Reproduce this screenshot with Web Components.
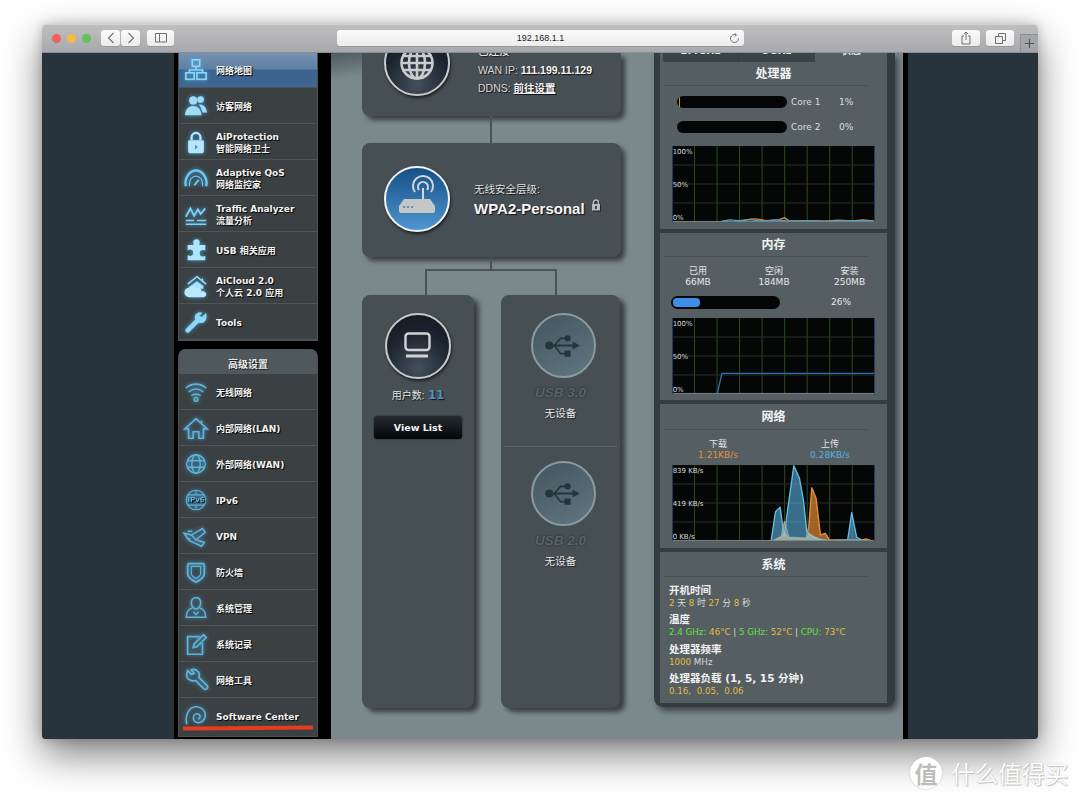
<!DOCTYPE html>
<html lang="zh">
<head>
<meta charset="utf-8">
<title>ASUS Router</title>
<style>
html, body { margin: 0; height: 799px; overflow: hidden; background: #fff; }
body { font-family: "DejaVu Sans", "Noto Sans CJK SC", sans-serif; position: relative; }
mac-window { box-shadow: 0 16px 38px rgba(0, 0, 0, .5), 0 0 12px rgba(0, 0, 0, .2); }
</style>
</head>
<body>

<mac-window>
    <mac-toolbar slot="toolbar"></mac-toolbar>
    <side-menu>
        <side-item active label="网络地图"><svg slot="icon" viewBox="0 0 28 28" fill="none" stroke="#8fd4f5" stroke-width="1.8"><rect x="10" y="3" width="8" height="7"/><rect x="3" y="17" width="9" height="7" /><rect x="15" y="17" width="10" height="7"/><path d="M14 10v4M7 17v-3h14v3"/></svg></side-item>
        <side-item label="访客网络"><svg slot="icon" viewBox="0 0 28 28" fill="#9fdcf8"><circle cx="11" cy="8" r="4.5"/><circle cx="19" cy="7" r="3.6"/><path d="M2 24c1-7 4-10 9-10s8 3 9 10zM17 12c5 0 8 3 9 9h-5c-1-4-2-6-4-9z"/></svg></side-item>
        <side-item label="AiProtection" sub="智能网络卫士"><svg slot="icon" viewBox="0 0 28 28" fill="#b5e6fb"><path d="M8 12V9a6 6 0 0 1 12 0v3h-2.500V9a3.500 3.500 0 0 0-7 0v3z"/><path fill-rule="evenodd" d="M7 12h14a1.500 1.500 0 0 1 1.500 1.500V24a2 2 0 0 1-2 2h-13a2 2 0 0 1-2-2V13.500A1.500 1.500 0 0 1 7 12zM13 17v5l3-2.500z"/></svg></side-item>
        <side-item label="Adaptive QoS" sub="网络监控家"><svg slot="icon" viewBox="0 0 28 28" fill="none" stroke="#6cc6ef"><path stroke-width="2.600" d="M3 23C1 13 8 6 14 6s13 7 11 17"/><path stroke-width="1.200" d="M7 23c-1-7 3-11 7-11s8 4 7 11"/><path stroke-width="2" d="M12 22l5-6"/></svg></side-item>
        <side-item label="Traffic Analyzer" sub="流量分析"><svg slot="icon" viewBox="0 0 28 28" fill="none" stroke="#82d0f3" stroke-width="2"><path d="M3 17l5-9 4 8 4-7 3 5 5-6"/><path stroke-width="1.500" d="M3 21h9M15 21h10M3 25h22"/></svg></side-item>
        <side-item label="USB 相关应用"><svg slot="icon" viewBox="0 0 28 28" fill="#b0e4fb"><path d="M11 6a3.500 3.500 0 0 1 7 0c0 1-.5 1.500-.5 2.500H24v6c-1 0-1.500-.5-2.500-.5a3.500 3.500 0 0 0 0 7c1 0 1.500-.5 2.500-.5V25H5v-5.500c1 .5 1.500 1 2.500 1a3.500 3.500 0 0 0 0-7c-1 0-1.500.5-2.500 1V8.500h6.500C11.500 7.500 11 7 11 6z"/></svg></side-item>
        <side-item label="AiCloud 2.0" sub="个人云 2.0 应用"><svg slot="icon" viewBox="0 0 28 28"><path fill="none" stroke="#9fdcf8" stroke-width="1.500" d="M5 12L15 4l10 8M21 6v3"/><path fill="#a6e0fa" d="M8 14l7-5 7 5v3H8z"/><path fill="#b8e8fc" d="M7 26a5 5 0 0 1-1-10c1-3 7-3 8 0 3-1 6 1 6 4 3-1 5 1 5 3s-1 3-3 3z"/></svg></side-item>
        <side-item label="Tools"><svg slot="icon" viewBox="0 0 28 28" fill="#8ed7f8"><path d="M25 4l-4.500 4.500-3-1L21 4c-3-1.500-7 0-8 3-.5 1.500-.3 3 .2 4.200L3 21.500a2.500 2.500 0 0 0 3.500 3.500l10.300-10.200c3 1 6 0 7.700-2.800 1.200-2.300 1-5.500.5-8z"/></svg></side-item>
    </side-menu>
    <side-menu heading="高级设置">
        <side-item label="无线网络"><svg slot="icon" viewBox="0 0 28 28" fill="none" stroke="#62b3d8" stroke-width="1.700"><path d="M3 10c6-6 16-6 22 0M6 14c5-4 11-4 16 0M9 18c3-2 7-2 10 0"/><circle cx="14" cy="22" r="2"/></svg></side-item>
        <side-item label="内部网络(LAN)"><svg slot="icon" viewBox="0 0 28 28" fill="none" stroke="#62b3d8" stroke-width="1.800"><path d="M2 15L14 4l12 11h-4v10h-5v-7h-6v7H6V15zM20 6v4"/></svg></side-item>
        <side-item label="外部网络(WAN)"><svg slot="icon" viewBox="0 0 28 28" fill="none" stroke="#62b3d8" stroke-width="1.500"><circle cx="14" cy="14" r="10"/><ellipse cx="14" cy="14" rx="4.500" ry="10"/><path d="M4.500 10.500h19M4.500 17.500h19"/></svg></side-item>
        <side-item label="IPv6"><svg slot="icon" viewBox="0 0 28 28" fill="none" stroke="#62b3d8" stroke-width="1.200"><circle cx="14" cy="14" r="10.500"/><path d="M5 8.500h18M5 19.500h18M14 3.500v4M14 20v4"/><text x="14" y="16.500" font-size="7.500" font-family="DejaVu Sans" font-weight="700" fill="#62b3d8" stroke="none" text-anchor="middle">IPv6</text></svg></side-item>
        <side-item label="VPN"><svg slot="icon" viewBox="0 0 28 28" fill="none" stroke="#62b3d8" stroke-width="1.600"><path d="M1 11l8 2 12-7 3 4-10 8 9 3-3 4-13-6z"/><path d="M9 13l5 5M5 9h5M4 17h4"/></svg></side-item>
        <side-item label="防火墙"><svg slot="icon" viewBox="0 0 28 28" fill="none" stroke="#62b3d8" stroke-width="2"><path d="M6 5h16l1 3v8c0 4-5 7-9 9-4-2-9-5-9-9V8z"/><path stroke-width="1.200" d="M9 8h10v8c0 2-3 4-5 5-2-1-5-3-5-5z"/></svg></side-item>
        <side-item label="系统管理"><svg slot="icon" viewBox="0 0 28 28" fill="none" stroke="#62b3d8" stroke-width="1.700"><path d="M14 3c3.500 0 5 2.500 5 5.500S17 15 14 15s-5-3.500-5-6.500S10.500 3 14 3z"/><path d="M10 14c-4 1-6 3-6.500 10h21C24 17 22 15 18 14M11 18l3 3 3-3"/></svg></side-item>
        <side-item label="系统记录"><svg slot="icon" viewBox="0 0 28 28" fill="none" stroke="#62b3d8" stroke-width="1.800"><path d="M18 6H5v19h16V13"/><path d="M11 18l1-4L22 4l3 3-10 10z"/></svg></side-item>
        <side-item label="网络工具"><svg slot="icon" viewBox="0 0 28 28" fill="none" stroke="#62b3d8" stroke-width="1.800"><path d="M5 4l4 4 3-1-3-4c4-1.500 8 1 8.500 5 0 1 0 2-.5 3l9 9a2.500 2.500 0 0 1-3.500 3.500l-9-9c-4 1.500-9-1-9.500-5-.2-2 .2-4 1-5z"/></svg></side-item>
        <side-item label="Software Center" tall><svg slot="icon" viewBox="0 0 28 28" fill="none" stroke="#62b3d8" stroke-width="1.700"><path d="M4 22C2 13 6 3 14 3c6 0 10 4 10 9s-4 9-9 8c-4-1-5-5-3-8 1.500-2 5-2 6 0 1 2 0 4-2 4"/></svg></side-item>
        <red-mark></red-mark>
    </side-menu>
    <router-map slot="map">
        <net-card slot="top" class="wan">
            <status-orb kind="dark" cut><svg viewBox="0 0 66 66" fill="none" stroke="#c9cccd" stroke-width="2.600"><circle cx="33" cy="33" r="15.500"/><ellipse cx="33" cy="33" rx="8" ry="15.500"/><path d="M33 17v32M18 26h30M17 33h32M18 40h30"/></svg></status-orb>
            <wan-info></wan-info>
        </net-card>
        <net-card slot="security" class="sec">
            <status-orb kind="blue"><svg viewBox="0 0 66 66"><path fill="#c4c6c8" d="M20 33h26l5 7v5a2 2 0 0 1-2 2H17a2 2 0 0 1-2-2v-5z"/><g fill="#5b7da0"><circle cx="20" cy="41" r="1.100"/><circle cx="24" cy="41" r="1.100"/><circle cx="28" cy="41" r="1.100"/></g><path fill="none" stroke="#d5d7d8" stroke-width="2" d="M39 33V22M35 24a5 5 0 1 1 8 0M31 26a10 10 0 1 1 16 0"/></svg></status-orb>
            <security-info></security-info>
        </net-card>
        <client-card slot="client"></client-card>
        <usb-card slot="usb"></usb-card>
    </router-map>
    <status-column slot="status">
        <status-panel heading="处理器" style="height:176px">
            <status-tabs slot="top"></status-tabs>
            <core-row label="Core 1" value="1%" level="1"></core-row>
            <core-row label="Core 2" value="0%"></core-row>
            <usage-chart style="margin-top:13px" series='[{"s":"#d98a33","p":"205,226 232,220 252,219 282,224 320,222 338,215 350,224 378,226 420,224 460,226 500,223 540,225 575,222 610,226"},{"s":"#46a7d6","p":"150,226 175,222 200,224 232,221 262,225 290,224 312,222 340,224 370,225 410,224 450,226 500,225 560,224 610,225"}]'></usage-chart>
        </status-panel>
        <status-panel heading="内存" style="height:167px">
            <stat-row>
                <stat-block label="已用" value="66MB"></stat-block>
                <stat-block label="空闲" value="184MB"></stat-block>
                <stat-block label="安装" value="250MB"></stat-block>
            </stat-row>
            <mem-bar value="26%" level="26"></mem-bar>
            <usage-chart style="margin-top:9px" series='[{"s":"#2f72b5","p":"136,227 150,166 610,166"}]'></usage-chart>
        </status-panel>
        <status-panel heading="网络" style="height:144px;--head-h:26px">
            <stat-row two>
                <stat-block label="下载" value="1.21KB/s" color="#e0913d"></stat-block>
                <stat-block label="上传" value="0.28KB/s" color="#58b0e0"></stat-block>
            </stat-row>
            <usage-chart labels="839 KB/s,419 KB/s,0 KB/s" style="margin-top:4px" series='[{"s":"#e0913d","f":"rgba(224,135,50,.72)","p":"303,227 328,215 338,170 351,217 403,220 411,185 420,68 433,100 446,210 461,205 473,225 573,225 583,222 598,227"},{"s":"#67bce6","f":"rgba(88,175,220,.62)","p":"298,227 311,140 325,127 337,215 348,130 366,2 383,40 395,105 405,200 423,215 443,223 473,227 528,225 540,143 555,217 573,227"},{"f":"rgba(190,195,170,.55)","p":"303,227 328,215 338,200 351,217 403,220 411,205 446,222 473,227"}]'></usage-chart>
        </status-panel>
        <status-panel heading="系统" style="height:151px;--head-h:25px">
            <sys-info></sys-info>
        </status-panel>
    </status-column>
</mac-window>
<water-mark></water-mark>

<script>
class MacWindow extends HTMLElement {
    constructor() {
        super();
        this.attachShadow({ mode: 'open' });
        this.shadowRoot.innerHTML = `
            <style>
                :host { display: block; position: absolute; left: 42px; top: 24px; width: 996px; height: 715px; border-radius: 5px 5px 3px 3px; overflow: hidden; }
                .body { display: flex; height: 686px; background: #27343e; }
                .page { display: flex; margin-left: 132px; width: 734px; background: #000; }
                .menu { width: 140px; margin-left: 4px; flex: none; display: flex; flex-direction: column; gap: 8px; }
                .map { width: 572px; margin-left: 13px; flex: none; background: linear-gradient(170deg, #4c5a60 0, #7b898d 28px); display: flex; padding-left: 31px; box-sizing: border-box; gap: 33px; }
            </style>
            <slot name="toolbar"></slot>
            <div class="body">
                <div class="page">
                    <div class="menu"><slot></slot></div>
                    <div class="map"><slot name="map"></slot><slot name="status"></slot></div>
                </div>
            </div>`;
    }
}

class MacToolbar extends HTMLElement {
    constructor() {
        super();
        this.attachShadow({ mode: 'open' });
        this.shadowRoot.innerHTML = `
            <style>
                :host { display: flex; align-items: flex-start; height: 29px; box-sizing: border-box; padding-top: 5px; background: linear-gradient(#bfbfc1, #a8a9ac); border-top: 1px solid #d2d2d4; border-bottom: 1px solid #8d8e90; position: relative; }
                .light { width: 9px; height: 9px; border-radius: 50%; margin-top: 3.500px; flex: none; }
                .btn { height: 16px; background: linear-gradient(#fafafa, #ececec); border-radius: 3px; box-shadow: 0 1px 0 #97989a; display: flex; align-items: center; justify-content: center; flex: none; }
                .url { width: 407px; margin-left: 163px; margin-right: 208px; font: 9px "Liberation Sans", sans-serif; color: #222; position: relative; }
                .url svg { position: absolute; right: 4px; top: 3px; }
                .plus { position: absolute; right: 0; top: 9px; width: 18px; height: 18px; background: #a4a5a8; border: 1px solid #8d8e90; border-width: 1px 0 0 1px; box-sizing: border-box; }
                svg { display: block; }
            </style>
            <span class="light" style="margin-left:10px;background:#f0625a"></span>
            <span class="light" style="margin-left:6px;background:#f4bd3f"></span>
            <span class="light" style="margin-left:6px;background:#5fc453"></span>
            <span class="btn" style="width:19px;margin-left:10px"><svg width="8" height="12" fill="none" stroke="#6e6e70" stroke-width="1.100"><path d="M6.500 1L1.500 6l5 5"/></svg></span>
            <span class="btn" style="width:19px;margin-left:1px"><svg width="8" height="12" fill="none" stroke="#6e6e70" stroke-width="1.100"><path d="M1.500 1l5 5-5 5"/></svg></span>
            <span class="btn" style="width:27px;margin-left:7px"><svg width="12" height="10" fill="none" stroke="#6e6e70"><path d="M.5.500h11v8.500H.5zM4.500 .5v8.500"/></svg></span>
            <span class="btn url">192.168.1.1<svg width="11" height="11" fill="none" stroke="#6e6e70"><path d="M9.500 5.500A4 4 0 1 1 7 1.800M5.500 .2l2 1.600-1.700 1.800"/></svg></span>
            <span class="btn" style="width:28px"><svg width="10" height="14" fill="none" stroke="#6e6e70"><path d="M3 5H1v8h8V5H7M5 9V1M3 3l2-2 2 2"/></svg></span>
            <span class="btn" style="width:28px;margin-left:6px"><svg width="11" height="11" fill="none" stroke="#6e6e70"><path d="M.5 3.500h7v7h-7zM3.500 3.500V.5h7v7h-3"/></svg></span>
            <span class="plus"><svg width="17" height="17" fill="none" stroke="#4e4f51" stroke-width="1.100"><path d="M8.500 4v9M4 8.500h9"/></svg></span>`;
    }
}

class SideMenu extends HTMLElement {
    constructor() {
        super();
        this.attachShadow({ mode: 'open' });
        const heading = this.getAttribute('heading');
        this.shadowRoot.innerHTML = `
            <style>
                :host { display: block; background: #3b4042; position: relative; border: solid #4b5153; border-width: 0 1px 1px; box-sizing: border-box; }
                :host([heading]) { border-radius: 8px 8px 0 0; flex: 1; margin-bottom: 2px; }
                .head { height: 25px; line-height: 31px; text-align: center; font-size: 10px; font-weight: 700; color: #e8e8e8; background: #4f585b; border-radius: 7px 7px 0 0; text-shadow: 1px 1px 0 #222; }
            </style>
            ${heading ? `<div class="head">${heading}</div>` : ''}
            <slot></slot>`;
    }
}

class SideItem extends HTMLElement {
    constructor() {
        super();
        this.attachShadow({ mode: 'open' });
        const sub = this.getAttribute('sub');
        this.shadowRoot.innerHTML = `
            <style>
                :host { display: flex; align-items: center; height: 36px; box-sizing: border-box; border-bottom: 1px solid #4f5557; color: #f2f2f2; font-size: 9px; font-weight: 700; line-height: 12px; text-shadow: 1px 1px 1px #000; }
                :host([active]) { height: 35px; background: linear-gradient(#7492b2 0, #5f80a3 16px, #3c638f 17px, #3f6691 100%); }
                :host([tall]) { height: 38px; border-bottom: 0; }
                .icon { width: 28px; height: 28px; margin-left: 3px; margin-right: 6px; flex: none; filter: drop-shadow(0 0 2px rgba(70, 175, 235, .85)); }
                ::slotted(svg) { display: block; width: 26px; height: 26px; margin: 1px; }
                .text { padding-top: 2px; }
                :host([tall]) .text { padding-top: 0; }
            </style>
            <div class="icon"><slot name="icon"></slot></div>
            <div class="text">${this.getAttribute('label')}${sub ? `<div>${sub}</div>` : ''}</div>`;
    }
}

class RedMark extends HTMLElement {
    constructor() {
        super();
        this.attachShadow({ mode: 'open' });
        this.shadowRoot.innerHTML = `
            <style>
                :host { display: block; position: absolute; left: 4px; bottom: 7px; width: 130px; height: 3.500px; background: #e63c20; transform: rotate(-.5deg); border-radius: 1px; }
            </style>`;
    }
}

class RouterMap extends HTMLElement {
    constructor() {
        super();
        this.attachShadow({ mode: 'open' });
        this.shadowRoot.innerHTML = `
            <style>
                :host { display: block; width: 259px; flex: none; }
                .line { width: 2px; height: 27px; margin-left: 128px; background: #4a5356; }
                .tree { height: 38px; position: relative; }
                .tree svg { display: block; }
                .row { display: flex; gap: 27px; }
            </style>
            <slot name="top"></slot>
            <div class="line"></div>
            <slot name="security"></slot>
            <div class="tree"><svg width="259" height="38" fill="none" stroke="#4a5356" stroke-width="2"><path d="M129 0v13M64 38V13h130v25"/></svg></div>
            <div class="row"><slot name="client"></slot><slot name="usb"></slot></div>`;
    }
}

class NetCard extends HTMLElement {
    constructor() {
        super();
        this.attachShadow({ mode: 'open' });
        this.shadowRoot.innerHTML = `
            <style>
                :host { display: flex; box-sizing: border-box; background: #464f53; box-shadow: 4px 4px 5px rgba(0, 0, 0, .55); border-radius: 8px; padding-left: 22px; overflow: hidden; gap: 24px; }
                :host(.wan) { height: 63px; border-radius: 0 0 8px 8px; gap: 28px; }
                :host(.sec) { height: 114px; padding-top: 23px; }
            </style>
            <slot></slot>`;
    }
}

class StatusOrb extends HTMLElement {
    constructor() {
        super();
        this.attachShadow({ mode: 'open' });
        this.shadowRoot.innerHTML = `
            <style>
                :host { display: block; width: 66px; height: 66px; flex: none; box-sizing: border-box; border-radius: 50%; border: 2.500px solid #c6cacc; box-shadow: 1px 2px 3px rgba(0, 0, 0, .6); position: relative; }
                :host([kind=dark]) { background: radial-gradient(circle at 50% 85%, #44505c 0, #1c2530 55%, #101720 100%); }
                :host([kind=blue]) { background: linear-gradient(#155086, #4f95cf); border-color: #f2f4f5; }
                :host([kind=usb]) { background: linear-gradient(150deg, #44565f, #5f7681); border-color: #8b9a9f; width: 65px; height: 65px; box-shadow: none; }
                :host([cut]) { margin-top: -23px; }
                ::slotted(svg) { position: absolute; left: -2.500px; top: -2.500px; width: 66px; height: 66px; }
            </style>
            <slot></slot>`;
    }
}

class WanInfo extends HTMLElement {
    constructor() {
        super();
        this.attachShadow({ mode: 'open' });
        this.shadowRoot.innerHTML = `
            <style>
                :host { display: block; font: 10.500px "Liberation Sans", "Noto Sans CJK SC", sans-serif; color: #d4d7d8; line-height: 17.500px; margin-top: 9.250px; text-shadow: 1px 1px 1px #111; }
                b { color: #f4f4f4; font-size: 10.500px; }
                u { color: #f4f4f4; font-weight: 700; }
                .cut { margin: -19.250px 0 1.750px; color: #fff; }
            </style>
            <div class="cut">已连接</div>
            <div>WAN IP: <b>111.199.11.129</b></div>
            <div>DDNS: <u>前往设置</u></div>`;
    }
}

class SecurityInfo extends HTMLElement {
    constructor() {
        super();
        this.attachShadow({ mode: 'open' });
        this.shadowRoot.innerHTML = `
            <style>
                :host { display: block; margin-top: 15px; font: 10.500px "Liberation Sans", "Noto Sans CJK SC", sans-serif; color: #dfe1e2; text-shadow: 1px 1px 1px #111; }
                .name { display: flex; align-items: flex-start; margin-top: 4px; font-size: 15px; line-height: 18px; font-weight: 700; color: #f6f6f6; gap: 6px; }
                svg { display: block; margin-top: -1px; filter: drop-shadow(1px 1px 0 #222); }
            </style>
            <div>无线安全层级:</div>
            <div class="name">WPA2-Personal <svg width="10" height="12" viewBox="0 0 10 12"><path fill="none" stroke="#b8bcbd" stroke-width="1.500" d="M2.500 5V3.500a2.500 2.500 0 0 1 5 0V5"/><path fill="#b8bcbd" fill-rule="evenodd" d="M1 5h8v6.500H1zM4.200 7v3h1.600V7z"/></svg></div>`;
    }
}

class ClientCard extends HTMLElement {
    constructor() {
        super();
        this.attachShadow({ mode: 'open' });
        this.shadowRoot.innerHTML = `
            <style>
                :host { display: flex; flex-direction: column; align-items: center; width: 112px; height: 413px; box-sizing: border-box; padding-top: 18px; background: #464f53; border-radius: 8px; box-shadow: 5px 4px 5px rgba(0, 0, 0, .55); font: 10px "Liberation Sans", "Noto Sans CJK SC", sans-serif; color: #e2e4e5; }
                .count { margin-top: 8px; height: 18px; line-height: 18px; text-shadow: 1px 1px 1px #111; }
                .count b { font: 700 11.500px "DejaVu Sans", sans-serif; color: #4f92cc; margin-left: 1px; }
                button { display: block; margin-top: 11px; width: 88px; height: 23px; border: 0; padding: 0; border-radius: 3px; background: linear-gradient(#252c2f, #050708); color: #f2f2f2; font: 700 9.500px "DejaVu Sans", sans-serif; box-shadow: 0 0 2px rgba(0, 0, 0, .6); }
            </style>
            <status-orb kind="dark"><svg viewBox="0 0 66 66" fill="none" stroke="#d1d3d4" stroke-width="2.400"><rect x="20.500" y="20.500" width="24" height="16.500" rx="3"/><path stroke-width="3" d="M21 43h22"/></svg></status-orb>
            <div class="count">用户数: <b>11</b></div>
            <button>View List</button>`;
    }
}

class UsbCard extends HTMLElement {
    constructor() {
        super();
        this.attachShadow({ mode: 'open' });
        const usb = `<svg viewBox="0 0 65 65" fill="#26343c" stroke="#26343c"><circle cx="18" cy="32" r="3.500"/><path d="M18 32h24" stroke-width="2"/><path stroke="none" d="M41 28l7 4-7 4z"/><path fill="none" stroke-width="1.600" d="M23 32l6-7h6M23 32l6 8h6"/><circle cx="36" cy="25" r="2.500"/><rect x="33.500" y="37.500" width="5" height="5"/></svg>`;
        this.shadowRoot.innerHTML = `
            <style>
                :host { display: block; width: 119px; height: 413px; background: #464f53; border-radius: 8px; box-shadow: 5px 4px 5px rgba(0, 0, 0, .55); font: 10.500px "Liberation Sans", "Noto Sans CJK SC", sans-serif; color: #e6e8e8; }
                .slot { height: 151px; box-sizing: border-box; padding: 18px 0 0 30px; }
                hr + .slot { padding-top: 14px; }
                hr { margin: 0 3px; border: 0; border-top: 1px solid #5e6669; }
                .name { margin: 6px 0 0 -30px; text-align: center; font: italic 700 13.500px/17px "Liberation Sans", sans-serif; color: #59646a; text-shadow: 0 0 2px #1d2326; }
                .none { margin: 4px 0 0 -30px; text-align: center; line-height: 16px; text-shadow: 1px 1px 1px #222; }
            </style>
            <div class="slot"><status-orb kind="usb">${usb}</status-orb><div class="name">USB 3.0</div><div class="none">无设备</div></div>
            <hr>
            <div class="slot"><status-orb kind="usb">${usb}</status-orb><div class="name">USB 2.0</div><div class="none">无设备</div></div>`;
    }
}

class StatusColumn extends HTMLElement {
    constructor() {
        super();
        this.attachShadow({ mode: 'open' });
        this.shadowRoot.innerHTML = `
            <style>
                :host { display: flex; flex-direction: column; gap: 4px; width: 241px; height: 654px; flex: none; box-sizing: border-box; padding: 0 8px 4px 6px; background: #333d41; border-radius: 0 0 9px 9px; box-shadow: 3px 4px 6px rgba(0, 0, 0, .5); }
            </style>
            <slot></slot>`;
    }
}

class StatusPanel extends HTMLElement {
    constructor() {
        super();
        this.attachShadow({ mode: 'open' });
        this.shadowRoot.innerHTML = `
            <style>
                :host { display: block; width: 227px; flex: none; background: #555f62; color: #e4e6e6; font-size: 9px; line-height: 11px; }
                .head { height: var(--head-h, 24px); box-sizing: border-box; margin: 0 19px 0 4px; text-align: center; padding-left: 15px; font-size: 12px; font-weight: 700; line-height: calc(var(--head-h, 24px) + 1px); color: #f2f3f3; border-bottom: 1px solid #465053; }
            </style>
            <slot name="top"></slot>
            <div class="head">${this.getAttribute('heading')}</div>
            <slot></slot>`;
    }
}

class StatusTabs extends HTMLElement {
    constructor() {
        super();
        this.attachShadow({ mode: 'open' });
        this.shadowRoot.innerHTML = `
            <style>
                :host { display: flex; height: 9px; overflow: hidden; padding-left: 3px; font-size: 10px; font-weight: 700; line-height: 9px; color: #e8e8e8; }
                span { display: block; height: 9px; text-align: center; background: #3a4448; }
                i { display: block; font-style: normal; margin-top: -7px; }
                span + span { border-left: 1px solid #333d41; }
                .on { background: none; }
            </style>
            <span style="width:75px"><i>2.4GHz</i></span>
            <span style="width:76px"><i>5GHz</i></span>
            <span class="on" style="width:72px;border:0"><i>状态</i></span>`;
    }
}

class CoreRow extends HTMLElement {
    constructor() {
        super();
        this.attachShadow({ mode: 'open' });
        const level = this.getAttribute('level');
        this.shadowRoot.innerHTML = `
            <style>
                :host { display: flex; align-items: center; height: 12px; margin: 0 0 0 17px; line-height: 12px; color: #dadcdc; }
                .bar { width: 110px; height: 12px; background: #050707; border-radius: 6px; overflow: hidden; margin-right: 4px; flex: none; }
                .bar i { display: block; height: 12px; width: ${level || 0}px; background: #d98a33; margin-left: 2px; }
                .name { width: 48px; }
            </style>
            <div class="bar"><i></i></div>
            <div class="name">${this.getAttribute('label')}</div>
            <div>${this.getAttribute('value')}</div>`;
        this.style.marginBottom = level ? '13px' : '0';
        this.style.marginTop = level ? '10px' : '0';
    }
}

class StatRow extends HTMLElement {
    constructor() {
        super();
        this.attachShadow({ mode: 'open' });
        this.shadowRoot.innerHTML = `
            <style>
                :host { display: grid; grid-template-columns: 76px 76px 75px; margin-top: 9px; text-align: center; }
                :host([two]) { grid-template-columns: 112px 112px; padding-left: 2px; }
            </style>
            <slot></slot>`;
    }
}

class StatBlock extends HTMLElement {
    constructor() {
        super();
        this.attachShadow({ mode: 'open' });
        const color = this.getAttribute('color') || 'inherit';
        this.shadowRoot.innerHTML = `
            <style>
                :host { display: block; }
                .value { color: ${color}; }
            </style>
            <div>${this.getAttribute('label')}</div>
            <div class="value">${this.getAttribute('value')}</div>`;
    }
}

class MemBar extends HTMLElement {
    constructor() {
        super();
        this.attachShadow({ mode: 'open' });
        this.shadowRoot.innerHTML = `
            <style>
                :host { display: flex; align-items: center; height: 13px; margin: 8px 0 0 11px; }
                .bar { width: 109px; height: 13px; box-sizing: border-box; padding: 2px; background: #050707; border-radius: 7px; margin-right: 51px; flex: none; }
                .bar i { display: block; height: 9px; width: ${this.getAttribute('level')}%; background: #3c8ee8; border-radius: 4px; }
            </style>
            <div class="bar"><i></i></div>
            <div>${this.getAttribute('value')}</div>`;
    }
}

class UsageChart extends HTMLElement {
    constructor() {
        super();
        this.attachShadow({ mode: 'open' });
        const labels = (this.getAttribute('labels') || '100%,50%,0%').split(',');
        const series = JSON.parse(this.getAttribute('series') || '[]');
        let grid = '';
        for (let i = 1; i < 9; i++) grid += `<path d="M${i * 67.7} 0v228" stroke="#2d4a22" stroke-width="3"/>`;
        for (let i = 1; i < 4; i++) grid += `<path d="M0 ${i * 57}h610" stroke="#2c3030" stroke-width="3"/>`;
        const lines = series.map(s => `<polygon points="${s.p}" fill="${s.f || 'none'}" stroke="${s.s || 'none'}" stroke-width="4" stroke-linejoin="round"/>`.replace('polygon', s.f ? 'polygon' : 'polyline')).join('');
        this.shadowRoot.innerHTML = `
            <style>
                :host { display: block; width: 203px; height: 76px; margin-left: 12px; }
                svg { display: block; width: 203px; height: 76px; }
                text { fill: #d5d8d8; font: 21px "DejaVu Sans", sans-serif; }
            </style>
            <svg viewBox="0 0 610 228">
                <rect width="610" height="228" fill="#050707"/>
                ${grid}
                ${lines}
                <path d="M0 226.500h610" stroke="#7b8589" stroke-width="3"/>
                <path d="M1.500 0v228M608.500 0v228" stroke="#2b3560" stroke-width="3"/>
                <text x="2" y="24">${labels[0]}</text>
                <text x="2" y="124">${labels[1]}</text>
                <text x="2" y="222">${labels[2]}</text>
            </svg>`;
    }
}

class SysInfo extends HTMLElement {
    constructor() {
        super();
        this.attachShadow({ mode: 'open' });
        this.shadowRoot.innerHTML = `
            <style>
                :host { display: block; padding: 7px 0 0 9px; font-size: 8.700px; line-height: 12px; color: #d8dada; }
                h4 { margin: 0; font-size: 10.500px; line-height: 13px; font-weight: 700; color: #f0f1f1; }
                p { margin: 0 0 4.300px; white-space: nowrap; }
                .y { color: #e4bb42; }
                .g { color: #66e043; }
            </style>
            <h4>开机时间</h4>
            <p><span class="y">2</span> 天 <span class="y">8</span> 时 <span class="y">27</span> 分 <span class="y">8</span> 秒</p>
            <h4>温度</h4>
            <p><span class="g">2.4 GHz:</span> <span class="y">46°C</span> | <span class="g">5 GHz:</span> <span class="y">52°C</span> | <span class="g">CPU:</span> <span class="y">73°C</span></p>
            <h4>处理器频率</h4>
            <p><span class="y">1000</span> MHz</p>
            <h4>处理器负载 (1, 5, 15 分钟)</h4>
            <p class="y">0.16,&nbsp; 0.05,&nbsp; 0.06</p>`;
    }
}

class WaterMark extends HTMLElement {
    constructor() {
        super();
        this.attachShadow({ mode: 'open' });
        this.shadowRoot.innerHTML = `
            <style>
                :host { display: flex; align-items: center; gap: 9px; position: absolute; left: 910px; top: 756px; color: #fff; font: 23.500px "Noto Sans CJK SC", sans-serif; text-shadow: 0 0 1px #aaa, 1px 1px 1px #c4c4c4; white-space: nowrap; }
                .logo { width: 32px; height: 32px; border-radius: 50%; background: #fff; box-shadow: 0 0 2px #bbb; color: #bdbdbd; font-size: 23px; font-weight: 700; line-height: 32px; text-align: center; text-shadow: none; }
            </style>
            <div class="logo">值</div>
            <div>什么值得买</div>`;
    }
}

customElements.define('mac-window', MacWindow);
customElements.define('mac-toolbar', MacToolbar);
customElements.define('side-menu', SideMenu);
customElements.define('side-item', SideItem);
customElements.define('red-mark', RedMark);
customElements.define('router-map', RouterMap);
customElements.define('net-card', NetCard);
customElements.define('status-orb', StatusOrb);
customElements.define('wan-info', WanInfo);
customElements.define('security-info', SecurityInfo);
customElements.define('client-card', ClientCard);
customElements.define('usb-card', UsbCard);
customElements.define('status-column', StatusColumn);
customElements.define('status-panel', StatusPanel);
customElements.define('status-tabs', StatusTabs);
customElements.define('core-row', CoreRow);
customElements.define('stat-row', StatRow);
customElements.define('stat-block', StatBlock);
customElements.define('mem-bar', MemBar);
customElements.define('usage-chart', UsageChart);
customElements.define('sys-info', SysInfo);
customElements.define('water-mark', WaterMark);
</script>
</body>
</html>
